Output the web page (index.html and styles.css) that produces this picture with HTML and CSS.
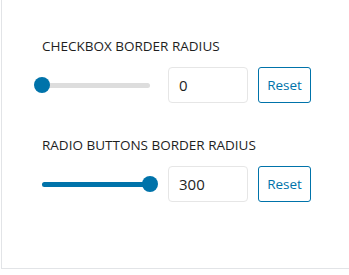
FILE: index.html
```html
<!DOCTYPE html>
<html>
<head>
<meta charset="utf-8">
<link rel="stylesheet" href="styles.css">
</head>
<body>
<div class="panel">
  <div class="field">
    <div class="label">CHECKBOX BORDER RADIUS</div>
    <div class="row">
      <div class="slider">
        <div class="track"></div>
        <div class="fill" style="width:0%"></div>
        <div class="thumb" style="left:0%"></div>
      </div>
      <div class="num">0</div>
      <button class="reset">Reset</button>
    </div>
  </div>
  <div class="field">
    <div class="label">RADIO BUTTONS BORDER RADIUS</div>
    <div class="row">
      <div class="slider">
        <div class="track"></div>
        <div class="fill" style="width:100%"></div>
        <div class="thumb" style="left:100%"></div>
      </div>
      <div class="num">300</div>
      <button class="reset">Reset</button>
    </div>
  </div>
</div>
</body>
</html>
```

FILE: styles.css
```css
html, body {
  margin: 0;
  padding: 0;
  background: #fff;
}
body {
  font-family: "Open Sans", "Noto Sans", sans-serif;
  color: #1e1e1e;
}
.panel {
  margin-left: 1px;
  height: 269px;
  box-sizing: border-box;
  border-left: 1px solid #e2e4e7;
  border-bottom: 1px solid #e2e4e7;
  padding: 36px 0 0 39px;
}
.field {
  margin-bottom: 32px;
}
.label {
  font-size: 13.5px;
  line-height: 20px;
  color: #1e1e1e;
  padding-left: 1px;
}
.row {
  display: flex;
  align-items: center;
  margin-top: 11px;
}
.slider {
  position: relative;
  width: 108px;
  height: 36px;
  margin-left: 1px;
  margin-right: 18px;
}
.track, .fill {
  position: absolute;
  left: 0;
  top: 16px;
  height: 5px;
  border-radius: 3px;
}
.track {
  width: 100%;
  background: #dddddd;
}
.fill {
  background: #0073aa;
}
.thumb {
  position: absolute;
  top: 10px;
  width: 16px;
  height: 16px;
  margin-left: -8px;
  border-radius: 50%;
  background: #0073aa;
}
.num {
  box-sizing: border-box;
  width: 80px;
  height: 36px;
  border: 1px solid #e6e6e6;
  border-radius: 4px;
  padding-left: 10px;
  font-size: 15px;
  line-height: 34px;
  color: #1e1e1e;
  margin-right: 10px;
}
.reset {
  box-sizing: border-box;
  width: 53px;
  height: 36px;
  border: 1px solid #0073aa;
  border-radius: 3px;
  background: #fff;
  color: #0073aa;
  font-family: "Open Sans", "Noto Sans", sans-serif;
  font-size: 13.5px;
  padding: 0;
}
```
